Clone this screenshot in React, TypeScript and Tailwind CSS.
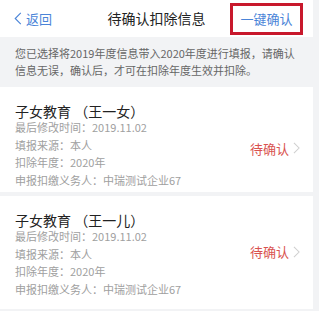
import React from "react";

type Item = {
  name: string;
  time: string;
  source: string;
  year: string;
  agent: string;
};

const items: Item[] = [
  { name: "子女教育 （王一女）", time: "2019.11.02", source: "本人", year: "2020年", agent: "中瑞测试企业67" },
  { name: "子女教育 （王一儿）", time: "2019.11.02", source: "本人", year: "2020年", agent: "中瑞测试企业67" },
];

function Chevron({ className }: { className?: string }) {
  return (
    <svg viewBox="0 0 8 14" className={className} fill="none" stroke="currentColor" strokeWidth="1.2">
      <polyline points="1,1 7,7 1,13" />
    </svg>
  );
}

function Card({ item, last }: { item: Item; last?: boolean }) {
  return (
    <div className={"flex items-center bg-white pl-[15px] pr-[13px] pt-[16px] " + (last ? "pb-[10px]" : "pb-[2px]")}>
      <div className="flex-1">
        <div className="text-[14px] leading-[16px] text-[#222]">{item.name}</div>
        <div className="text-[11px] leading-[17.7px] text-[#a0a0a0]">
          <div>最后修改时间：{item.time}</div>
          <div>填报来源：{item.source}</div>
          <div>扣除年度：{item.year}</div>
          <div>申报扣缴义务人：{item.agent}</div>
        </div>
      </div>
      <div className={"flex items-center gap-[4px] " + (last ? "mt-[-6px]" : "mt-[4px]")}>
        <span className="text-[13px] text-[#d9534f]">待确认</span>
        <Chevron className="w-[7px] h-[12px] text-[#cfcfcf]" />
      </div>
    </div>
  );
}

export default function App() {
  return (
    <div className="w-[319px] h-[311px] overflow-hidden bg-[#f2f3f5] font-['Noto_Sans_CJK_SC','Noto_Sans',sans-serif]">
      <div className="w-[313px]">
        {/* Header */}
        <div className="grid grid-cols-[1fr_auto_1fr] items-center h-[37px] bg-white">
          <div className="flex items-center gap-[4px] pl-[14px] text-[#4a84d8]">
            <Chevron className="w-[8px] h-[13px] rotate-180" />
            <span className="text-[13px]">返回</span>
          </div>
          <div className="text-[14px] text-[#222]">待确认扣除信息</div>
          <div className="justify-self-end mr-[10px] flex items-center justify-center w-[73px] h-[32px] border-[3px] border-[#c8182c] text-[13px] text-[#4a84d8]">
            一键确认
          </div>
        </div>

        {/* Notice */}
        <div className="px-[15px] py-[8px] text-[11px] leading-[17px] text-[#666]">
          您已选择将2019年度信息带入2020年度进行填报，请确认信息无误，确认后，才可在扣除年度生效并扣除。
        </div>

        <div className="flex flex-col gap-[4px]">
          {items.map((it, i) => (
            <Card key={i} item={it} last={i === items.length - 1} />
          ))}
        </div>
      </div>
    </div>
  );
}
